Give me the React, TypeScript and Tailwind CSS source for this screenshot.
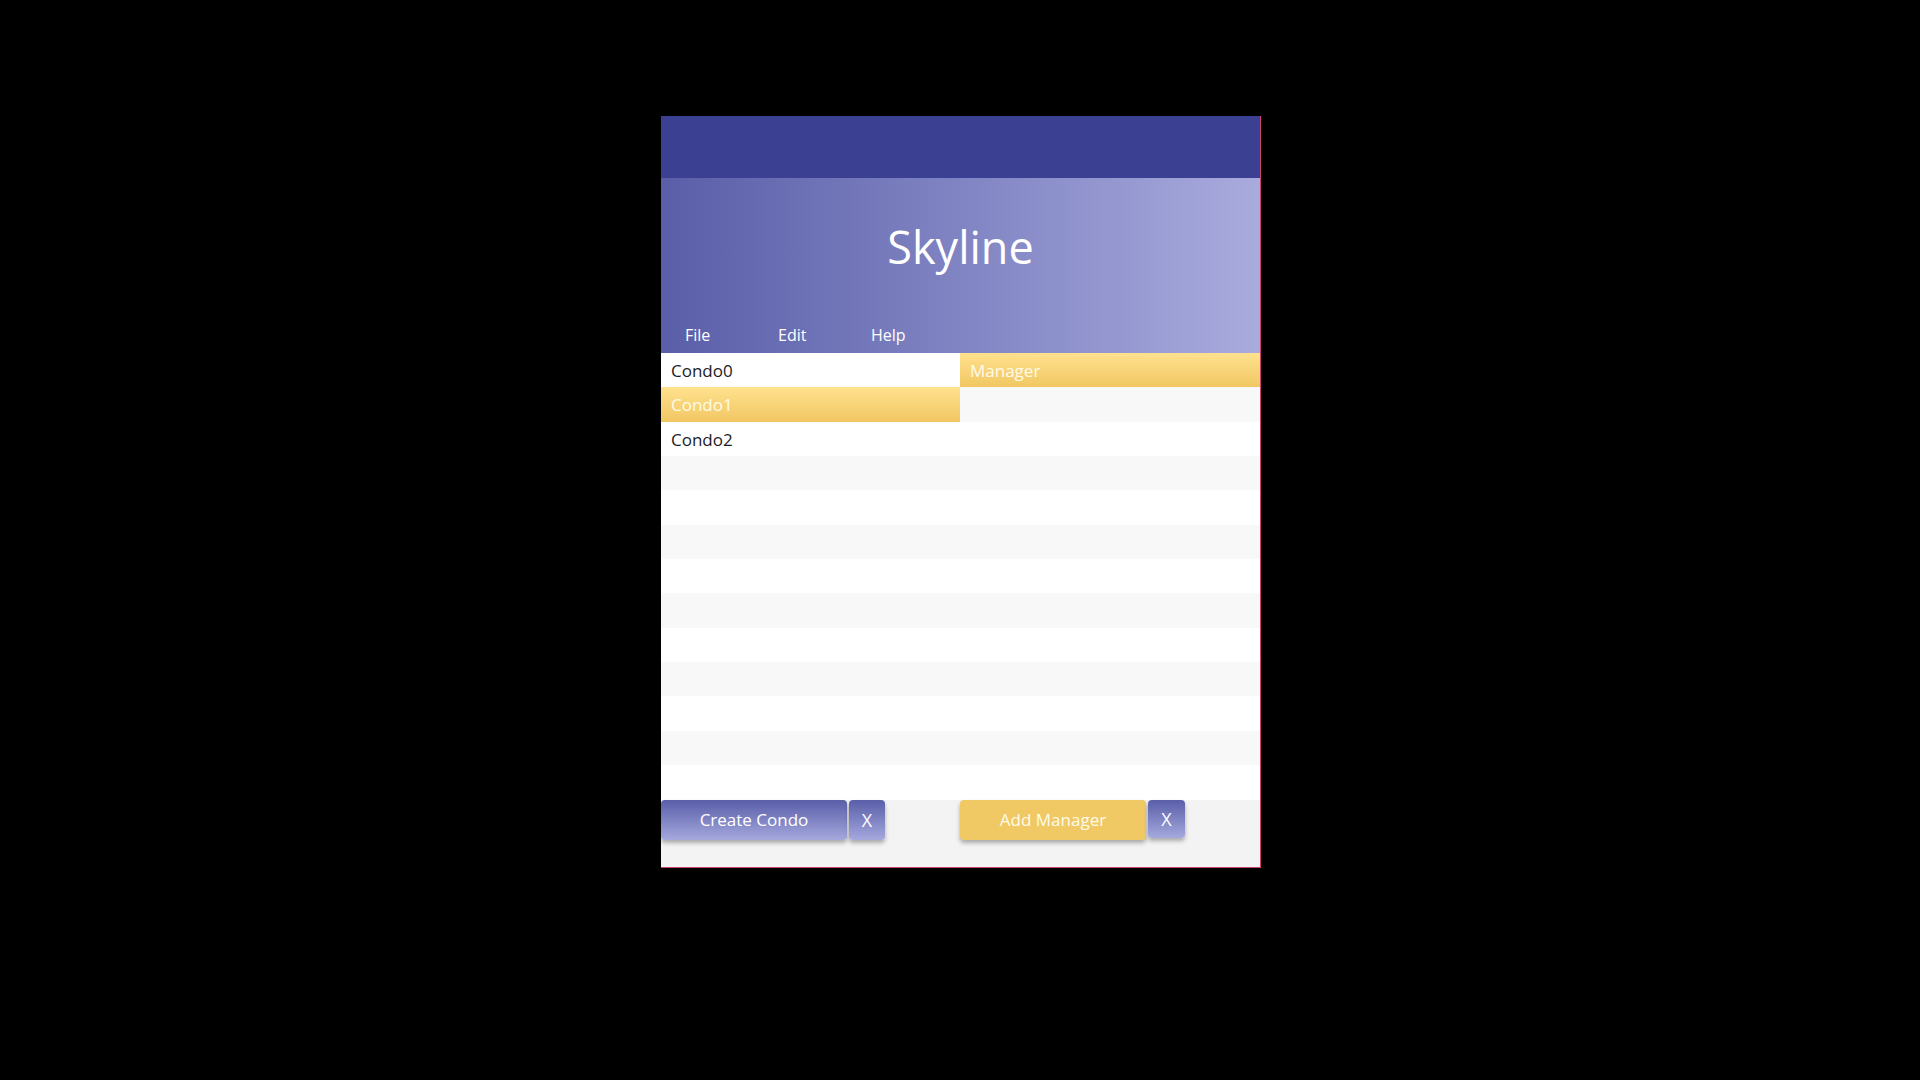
import React from "react";

const condos = ["Condo0", "Condo1", "Condo2"];
const managers = ["Manager"];
const ROWS = 13;

const font = { fontFamily: '"Open Sans", "Noto Sans", sans-serif' };

const Row: React.FC<{ text?: string; selected?: boolean; odd: boolean }> = ({
  text,
  selected,
  odd,
}) => (
  <div
    className={`flex h-[34.33px] items-center pt-[1px] text-[17px] leading-none ${
      selected
        ? "bg-gradient-to-b from-[#ffe18e] to-[#f1c762] pl-[10px] text-[#fffbe9]"
        : `pl-[10px] text-[#1c1c24] ${odd ? "bg-[#f8f8f8]" : "bg-white"}`
    }`}
  >
    {text}
  </div>
);

export default function App() {
  return (
    <div className="min-h-screen w-full bg-black pl-[661px] pt-[116px]" style={font}>
      <div className="flex h-[752px] w-[600px] flex-col border-r border-b border-[#c9416c] bg-white">
        {/* title bar */}
        <div className="h-[62px] bg-[#3b4092]" />

        {/* header */}
        <div className="flex h-[175px] flex-col bg-gradient-to-r from-[#5a5ea8] to-[#a9abdd] text-white">
          <h1 className="mt-[46px] text-center text-[45px] font-normal leading-none">Skyline</h1>
          <div className="mt-[58px] flex text-[16px] leading-none">
            {["File", "Edit", "Help"].map((m) => (
              <div key={m} className="w-[93px] pl-[24px]">
                {m}
              </div>
            ))}
          </div>
        </div>

        {/* lists */}
        <div className="grid flex-1 grid-cols-[299px_1fr]">
          <div className="flex flex-col">
            {Array.from({ length: ROWS }).map((_, i) => (
              <Row key={i} text={condos[i]} selected={i === 1} odd={i % 2 === 1} />
            ))}
          </div>
          <div className="flex flex-col">
            {Array.from({ length: ROWS }).map((_, i) => (
              <Row key={i} text={managers[i]} selected={i === 0} odd={i % 2 === 1} />
            ))}
          </div>
        </div>

        {/* actions */}
        <div className="grid h-[67px] grid-cols-[299px_1fr] bg-[#f3f3f3]">
          <div className="flex items-start gap-[2px]">
            <button className="h-[40px] w-[186px] rounded-[4px] bg-gradient-to-b from-[#5a5ea8] to-[#a6a9de] text-[17px] text-white shadow-[0_3px_4px_rgba(0,0,0,0.3)]">
              Create Condo
            </button>
            <button className="h-[40px] w-[36px] rounded-[4px] bg-gradient-to-b from-[#5a5ea8] to-[#a6a9de] text-[18px] text-white shadow-[0_3px_4px_rgba(0,0,0,0.3)]">
              X
            </button>
          </div>
          <div className="flex items-start gap-[2px]">
            <button className="h-[40px] w-[186px] rounded-[4px] bg-[#f1c964] text-[17px] text-[#fffbe9] shadow-[0_3px_4px_rgba(0,0,0,0.3)]">
              Add Manager
            </button>
            <button className="h-[38px] w-[37px] rounded-[4px] bg-gradient-to-b from-[#5a5ea8] to-[#a6a9de] text-[18px] text-white shadow-[0_3px_4px_rgba(0,0,0,0.3)]">
              X
            </button>
          </div>
        </div>
      </div>
    </div>
  );
}
